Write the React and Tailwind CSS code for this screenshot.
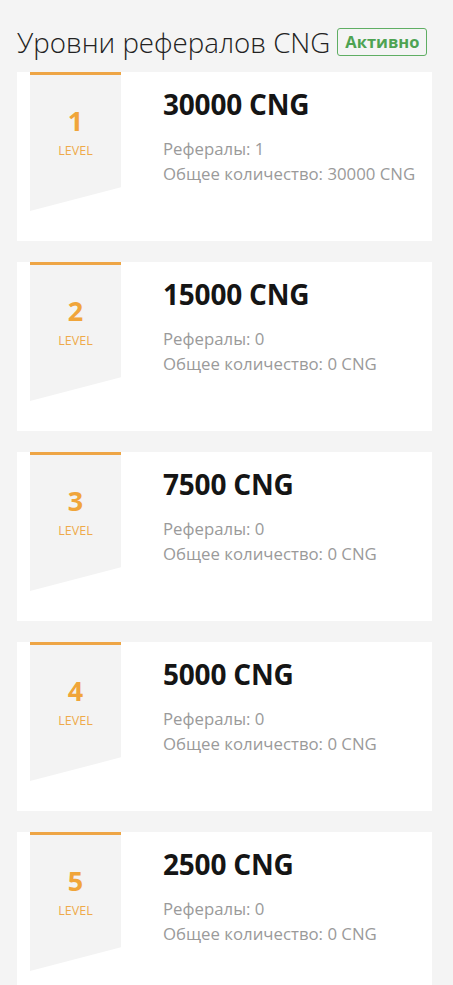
// Referral levels page
const levels = [
  { level: 1, amount: '30000 CNG', refs: 1, total: '30000 CNG' },
  { level: 2, amount: '15000 CNG', refs: 0, total: '0 CNG' },
  { level: 3, amount: '7500 CNG', refs: 0, total: '0 CNG' },
  { level: 4, amount: '5000 CNG', refs: 0, total: '0 CNG' },
  { level: 5, amount: '2500 CNG', refs: 0, total: '0 CNG' },
];

const LevelCard = ({ item }) => (
  <div className="flex h-[169px] bg-white pl-[13px]">
    {/* Flag ribbon */}
    <div className="w-[91px] h-[139px] bg-[#f3f3f3] border-t-[3px] border-[#eea545] [clip-path:polygon(0_0,100%_0,100%_83%,0_100%)] flex flex-col items-center pt-[31px]">
      <span className="text-[27px] leading-[30px] font-bold text-[#f0a53a]">{item.level}</span>
      <span className="text-[12.5px] leading-[16px] mt-[7px] text-[#eeaa4a]">LEVEL</span>
    </div>
    {/* Info */}
    <div className="pl-[42px] pt-[14px]">
      <div className="text-[28px] leading-[36px] font-bold text-[#151515] tracking-[-0.2px]">{item.amount}</div>
      <div className="mt-[14px] text-[16.8px] leading-[25px] text-[#9a9a9a]">
        <div>Рефералы: {item.refs}</div>
        <div>Общее количество: {item.total}</div>
      </div>
    </div>
  </div>
);

export default function App() {
  return (
    <div className="min-h-screen bg-[#f4f4f4] px-[17px] pt-[24px] font-['Open_Sans',sans-serif] overflow-hidden h-[985px]">
      <div className="flex items-center gap-[7px] h-[36px]">
        <h1 className="text-[27.7px] leading-[36px] font-light text-[#222]">Уровни рефералов CNG</h1>
        <span className="border border-[#5fae63] rounded-[3px] px-[7px] h-[28px] flex items-center text-[16.5px] font-bold text-[#4ea352]">Активно</span>
      </div>
      <div className="mt-[12px] flex flex-col gap-[21px] mr-[4px]">
        {levels.map((item) => (
          <LevelCard key={item.level} item={item} />
        ))}
      </div>
    </div>
  );
}
